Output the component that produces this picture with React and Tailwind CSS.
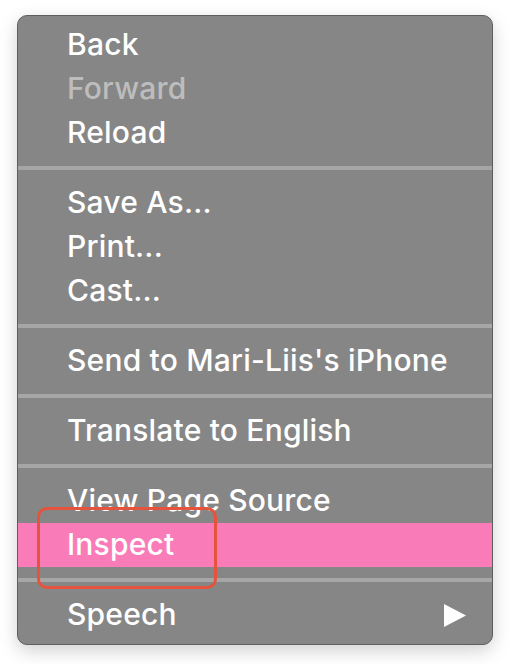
import { Fragment } from 'react';

const groups = [
  [{ label: 'Back' }, { label: 'Forward', disabled: true }, { label: 'Reload' }],
  [{ label: 'Save As...' }, { label: 'Print...' }, { label: 'Cast...' }],
  [{ label: "Send to Mari-Liis's iPhone" }],
  [{ label: 'Translate to English' }],
  [{ label: 'View Page Source' }, { label: 'Inspect', active: true }],
  [{ label: 'Speech', submenu: true }],
];

function Item({ item }) {
  const tone = item.disabled ? 'text-[#bdbdbd]' : 'text-white';
  const bg = item.active ? 'bg-[#f97bb7]' : '';
  return (
    <div className={`flex h-[44px] items-center justify-between pl-[49px] pr-[26px] ${bg}`}>
      <span className={`-mt-[2px] text-[30px] font-medium leading-none tracking-[0.2px] ${tone}`}>{item.label}</span>
      {item.submenu && (
        <svg width="22" height="23" viewBox="0 0 22 23" className="shrink-0">
          <path d="M0 0 L22 11.5 L0 23 Z" fill="#fff" />
        </svg>
      )}
    </div>
  );
}

export default function App() {
  return (
    <div className="relative h-[664px] w-[513px] overflow-hidden bg-white pl-[17px] pt-[15px]" style={{ fontFamily: 'Inter, "Liberation Sans", sans-serif' }}>
      <div className="w-[476px] overflow-hidden rounded-[10px] border border-[#5f5f5f] bg-[#868686] py-[7px] shadow-[0_6px_18px_rgba(0,0,0,0.18)]">
        {groups.map((g, i) => (
          <Fragment key={i}>
            {i > 0 && <div className="my-[11px] h-[4px] bg-[#a6a6a6]" />}
            {g.map(item => <Item key={item.label} item={item} />)}
          </Fragment>
        ))}
      </div>
      <div className="absolute left-[37px] top-[507px] h-[82px] w-[180px] rounded-[10px] border-[3px] border-[#e5533d]" />
    </div>
  );
}
